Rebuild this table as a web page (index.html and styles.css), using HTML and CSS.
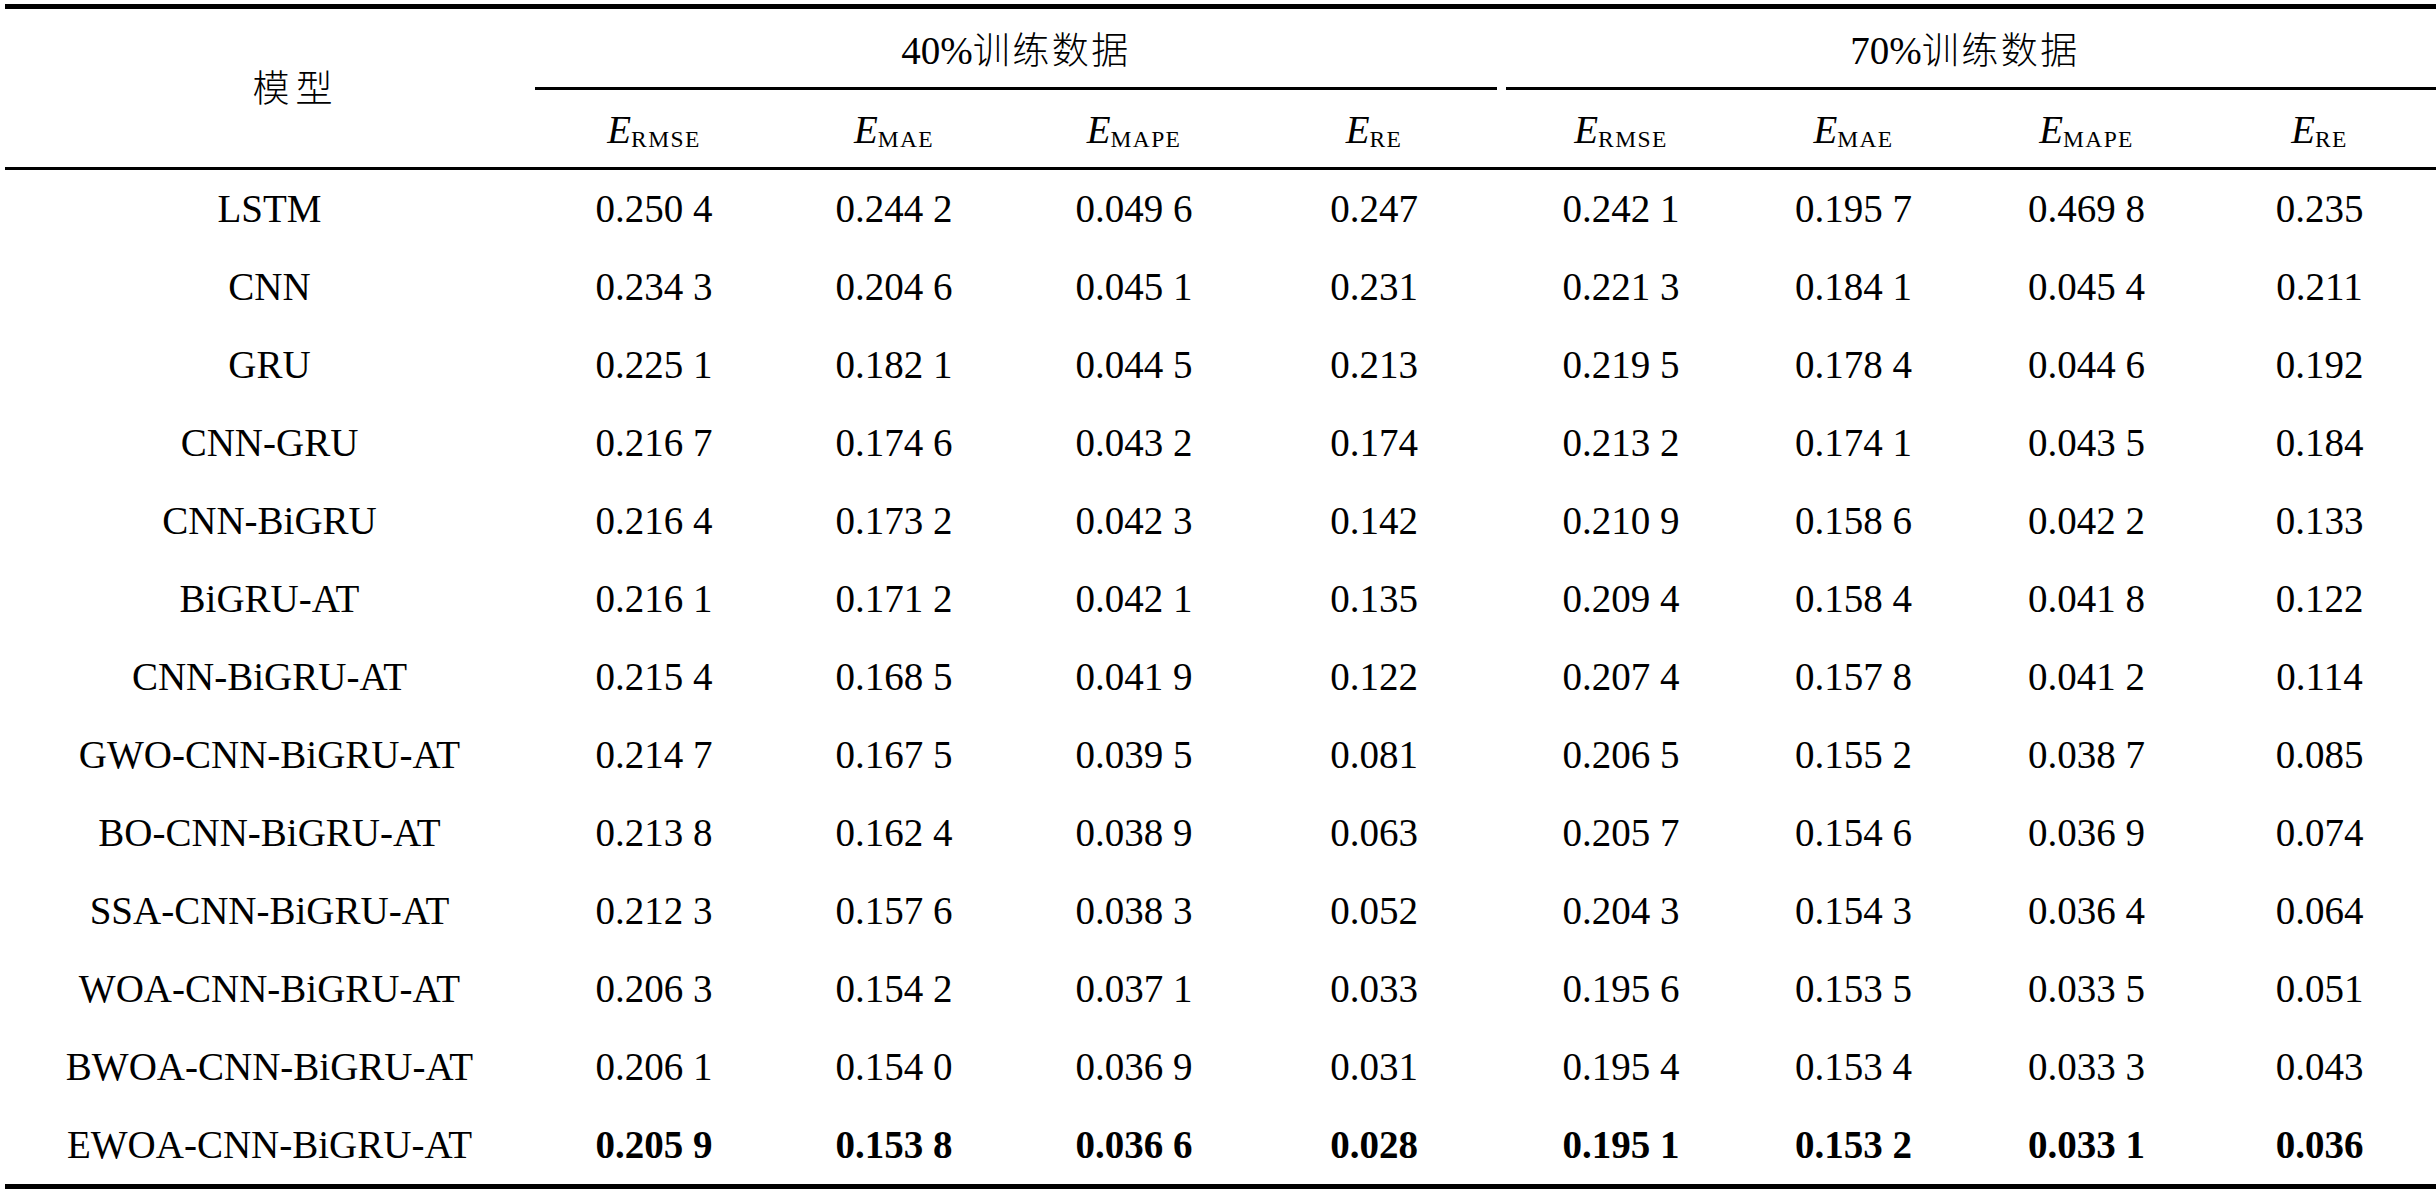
FILE: index.html
```html
<!DOCTYPE html>
<html lang="zh-CN">
<head>
<meta charset="utf-8">
<title>模型预测误差对比</title>
<link rel="stylesheet" href="styles.css">
</head>
<body>
<table class="results">
  <colgroup>
    <col class="c-model">
    <col class="c-40"><col class="c-40"><col class="c-40"><col class="c-40">
    <col class="c-70a"><col class="c-70"><col class="c-70"><col class="c-70">
  </colgroup>
  <thead>
    <tr class="groups">
      <th rowspan="2" class="model-head"><span class="cjk model-label">模型</span></th>
      <th colspan="4" class="group"><div class="group-label g40">40%<span class="cjk">训练数据</span></div></th>
      <th colspan="4" class="group"><div class="group-label g70">70%<span class="cjk">训练数据</span></div></th>
    </tr>
    <tr class="metrics">
      <th><i>E</i><sub>RMSE</sub></th>
      <th><i>E</i><sub>MAE</sub></th>
      <th><i>E</i><sub>MAPE</sub></th>
      <th><i>E</i><sub>RE</sub></th>
      <th><i>E</i><sub>RMSE</sub></th>
      <th><i>E</i><sub>MAE</sub></th>
      <th><i>E</i><sub>MAPE</sub></th>
      <th><i>E</i><sub>RE</sub></th>
    </tr>
  </thead>
  <tbody>
    <tr><td>LSTM</td><td>0.250 4</td><td>0.244 2</td><td>0.049 6</td><td>0.247</td><td>0.242 1</td><td>0.195 7</td><td>0.469 8</td><td>0.235</td></tr>
    <tr><td>CNN</td><td>0.234 3</td><td>0.204 6</td><td>0.045 1</td><td>0.231</td><td>0.221 3</td><td>0.184 1</td><td>0.045 4</td><td>0.211</td></tr>
    <tr><td>GRU</td><td>0.225 1</td><td>0.182 1</td><td>0.044 5</td><td>0.213</td><td>0.219 5</td><td>0.178 4</td><td>0.044 6</td><td>0.192</td></tr>
    <tr><td>CNN-GRU</td><td>0.216 7</td><td>0.174 6</td><td>0.043 2</td><td>0.174</td><td>0.213 2</td><td>0.174 1</td><td>0.043 5</td><td>0.184</td></tr>
    <tr><td>CNN-BiGRU</td><td>0.216 4</td><td>0.173 2</td><td>0.042 3</td><td>0.142</td><td>0.210 9</td><td>0.158 6</td><td>0.042 2</td><td>0.133</td></tr>
    <tr><td>BiGRU-AT</td><td>0.216 1</td><td>0.171 2</td><td>0.042 1</td><td>0.135</td><td>0.209 4</td><td>0.158 4</td><td>0.041 8</td><td>0.122</td></tr>
    <tr><td>CNN-BiGRU-AT</td><td>0.215 4</td><td>0.168 5</td><td>0.041 9</td><td>0.122</td><td>0.207 4</td><td>0.157 8</td><td>0.041 2</td><td>0.114</td></tr>
    <tr><td>GWO-CNN-BiGRU-AT</td><td>0.214 7</td><td>0.167 5</td><td>0.039 5</td><td>0.081</td><td>0.206 5</td><td>0.155 2</td><td>0.038 7</td><td>0.085</td></tr>
    <tr><td>BO-CNN-BiGRU-AT</td><td>0.213 8</td><td>0.162 4</td><td>0.038 9</td><td>0.063</td><td>0.205 7</td><td>0.154 6</td><td>0.036 9</td><td>0.074</td></tr>
    <tr><td>SSA-CNN-BiGRU-AT</td><td>0.212 3</td><td>0.157 6</td><td>0.038 3</td><td>0.052</td><td>0.204 3</td><td>0.154 3</td><td>0.036 4</td><td>0.064</td></tr>
    <tr><td>WOA-CNN-BiGRU-AT</td><td>0.206 3</td><td>0.154 2</td><td>0.037 1</td><td>0.033</td><td>0.195 6</td><td>0.153 5</td><td>0.033 5</td><td>0.051</td></tr>
    <tr><td>BWOA-CNN-BiGRU-AT</td><td>0.206 1</td><td>0.154 0</td><td>0.036 9</td><td>0.031</td><td>0.195 4</td><td>0.153 4</td><td>0.033 3</td><td>0.043</td></tr>
    <tr class="best"><td>EWOA-CNN-BiGRU-AT</td><td>0.205 9</td><td>0.153 8</td><td>0.036 6</td><td>0.028</td><td>0.195 1</td><td>0.153 2</td><td>0.033 1</td><td>0.036</td></tr>
  </tbody>
</table>
</body>
</html>
```

FILE: styles.css
```css
html, body {
  background: #ffffff;
}

body {
  margin: 4px 0 0 5px;
  color: #000000;
  font-family: "Liberation Serif", "Noto Sans CJK SC", serif;
  font-size: 39px;
}

.results {
  width: 2431px;
  table-layout: fixed;
  border-collapse: separate;
  border-spacing: 0;
  border-top: 5px solid #000;
  border-bottom: 5px solid #000;
}

.c-model { width: 529px; }
.c-40 { width: 240px; }
.c-70a { width: 243px; }
.c-70 { width: 233px; }

.results th,
.results td {
  padding: 0;
  text-align: center;
  font-weight: normal;
  white-space: nowrap;
}

.cjk {
  font-family: "Noto Sans CJK SC", sans-serif;
  font-size: 37px;
  font-weight: 300;
  line-height: 1;
  letter-spacing: 2.5px;
}

/* header: model label spanning two header rows */
.model-head {
  vertical-align: middle;
  line-height: 1;
  border-bottom: 3px solid #000;
  padding-left: 52px !important;
}

.model-label {
  letter-spacing: 6px;
}

/* header: training-share groups */
.group {
  vertical-align: top;
}

.group-label {
  height: 73px;
  padding-top: 5px;
  line-height: 73px;
  border-bottom: 3px solid #000;
}

.g40 {
  margin: 0 -3px 0 1px;
}

.g70 {
  margin-left: 12px;
  padding-right: 12px;
}

/* header: metric names */
.metrics th {
  padding-top: 2px;
  line-height: 75px;
  border-bottom: 3px solid #000;
}

.metrics i {
  font-style: italic;
}

.metrics sub {
  font-size: 23.5px;
  line-height: 0;
  letter-spacing: 1.4px;
  vertical-align: -4px;
}

.metrics th:nth-child(5),
tbody td:nth-child(6) {
  padding-left: 11px;
}

/* body rows */
tbody td {
  line-height: 78px;
}

.best td + td {
  font-weight: bold;
}
```
